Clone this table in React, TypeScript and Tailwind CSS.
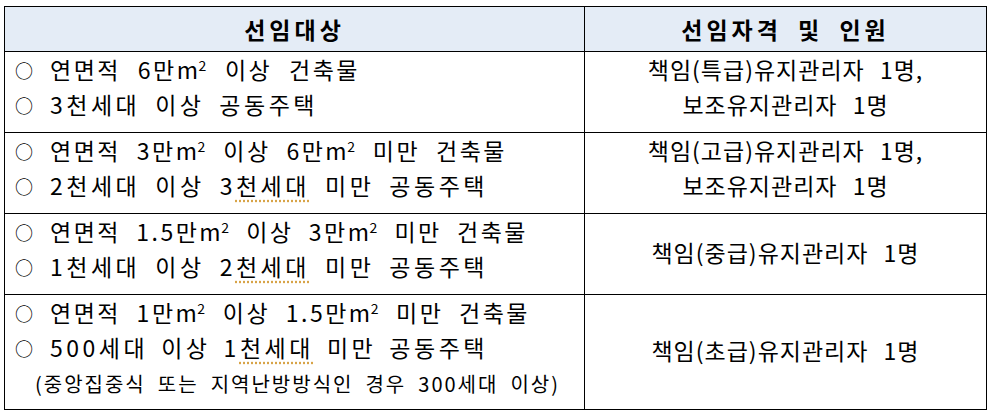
import React from 'react';

const M2 = () => (
  <>
    <span className="tracking-[0.5px]">m</span>
    <sup className="text-[14px] tracking-[2px] -top-[0.6em]">2</sup>
  </>
);

const Sq = ({ children }: { children: React.ReactNode }) => (
  <span className="underline decoration-dotted decoration-[#d8a448] underline-offset-[5px]">{children}</span>
);

// each line is spread to the width it has in the source document
const Line = ({ children, w, small, wide }: { children: React.ReactNode; w: number; small?: boolean; wide?: boolean }) => (
  <div className={`flex items-center ${small ? 'h-[38px]' : 'h-[35px]'}`}>
    {!small && <span className="w-[45px] shrink-0 pl-[10px] text-[18px] tracking-normal">○</span>}
    <span
      className={`inline-block whitespace-nowrap text-justify [text-align-last:justify] ${
        small ? 'ml-[30px] text-[20px] tracking-[2px] [word-spacing:2px]' : wide ? 'tracking-[3.5px]' : ''
      }`}
      style={{ width: w }}
    >
      {children}
    </span>
  </div>
);

const Right = ({ children }: { children: React.ReactNode }) => (
  <div className="h-[35px] flex items-center justify-center tracking-[1px] [word-spacing:9px]">{children}</div>
);

export default function App() {
  const cell = 'border border-black p-0 align-middle';
  return (
    <div className="bg-white w-[992px] h-[413px] pt-[6px] pl-[4px] font-['Noto_Sans_CJK_KR',sans-serif] text-black text-[23px] tracking-[2.5px] [word-spacing:3px] leading-none">
      <table className="border-collapse table-fixed w-[982px]">
        <colgroup>
          <col className="w-[580px]" />
          <col className="w-[402px]" />
        </colgroup>
        <tbody>
          <tr className="h-[45px] bg-[#e4ecf6]">
            <td className={`${cell} text-center font-bold tracking-[4px]`}>선임대상</td>
            <td className={`${cell} text-center font-bold tracking-[4px] [word-spacing:7px]`}>선임자격 및 인원</td>
          </tr>
          <tr className="h-[80px]">
            <td className={cell}>
              <div className="pb-[10px]">
                <Line w={310}>연면적 6만<M2 /> 이상 건축물</Line>
                <Line w={268} wide>3천세대 이상 공동주택</Line>
              </div>
            </td>
            <td className={cell}>
              <div className="pb-[10px]">
                <Right>책임(특급)유지관리자 1명,</Right>
                <Right>보조유지관리자 1명</Right>
              </div>
            </td>
          </tr>
          <tr className="h-[80px]">
            <td className={cell}>
              <div className="pb-[10px]">
                <Line w={457}>연면적 3만<M2 /> 이상 6만<M2 /> 미만 건축물</Line>
                <Line w={438} wide>2천세대 이상 3<Sq>천세대</Sq> 미만 공동주택</Line>
              </div>
            </td>
            <td className={cell}>
              <div className="pb-[10px]">
                <Right>책임(고급)유지관리자 1명,</Right>
                <Right>보조유지관리자 1명</Right>
              </div>
            </td>
          </tr>
          <tr className="h-[80px]">
            <td className={cell}>
              <div className="pb-[10px]">
                <Line w={478}>연면적 1.5만<M2 /> 이상 3만<M2 /> 미만 건축물</Line>
                <Line w={438} wide>1천세대 이상 2<Sq>천세대</Sq> 미만 공동주택</Line>
              </div>
            </td>
            <td className={cell}>
              <div className="pb-[4px]">
                <Right>책임(중급)유지관리자 1명</Right>
              </div>
            </td>
          </tr>
          <tr className="h-[115px]">
            <td className={cell}>
              <div className="pb-[6px]">
                <Line w={480}>연면적 1만<M2 /> 이상 1.5만<M2 /> 미만 건축물</Line>
                <Line w={438} wide>500세대 이상 1<Sq>천세대</Sq> 미만 공동주택</Line>
                <Line w={525} small>(중앙집중식 또는 지역난방방식인 경우 300세대 이상)</Line>
              </div>
            </td>
            <td className={cell}>
              <div className="pb-[4px]">
                <Right>책임(초급)유지관리자 1명</Right>
              </div>
            </td>
          </tr>
        </tbody>
      </table>
    </div>
  );
}
